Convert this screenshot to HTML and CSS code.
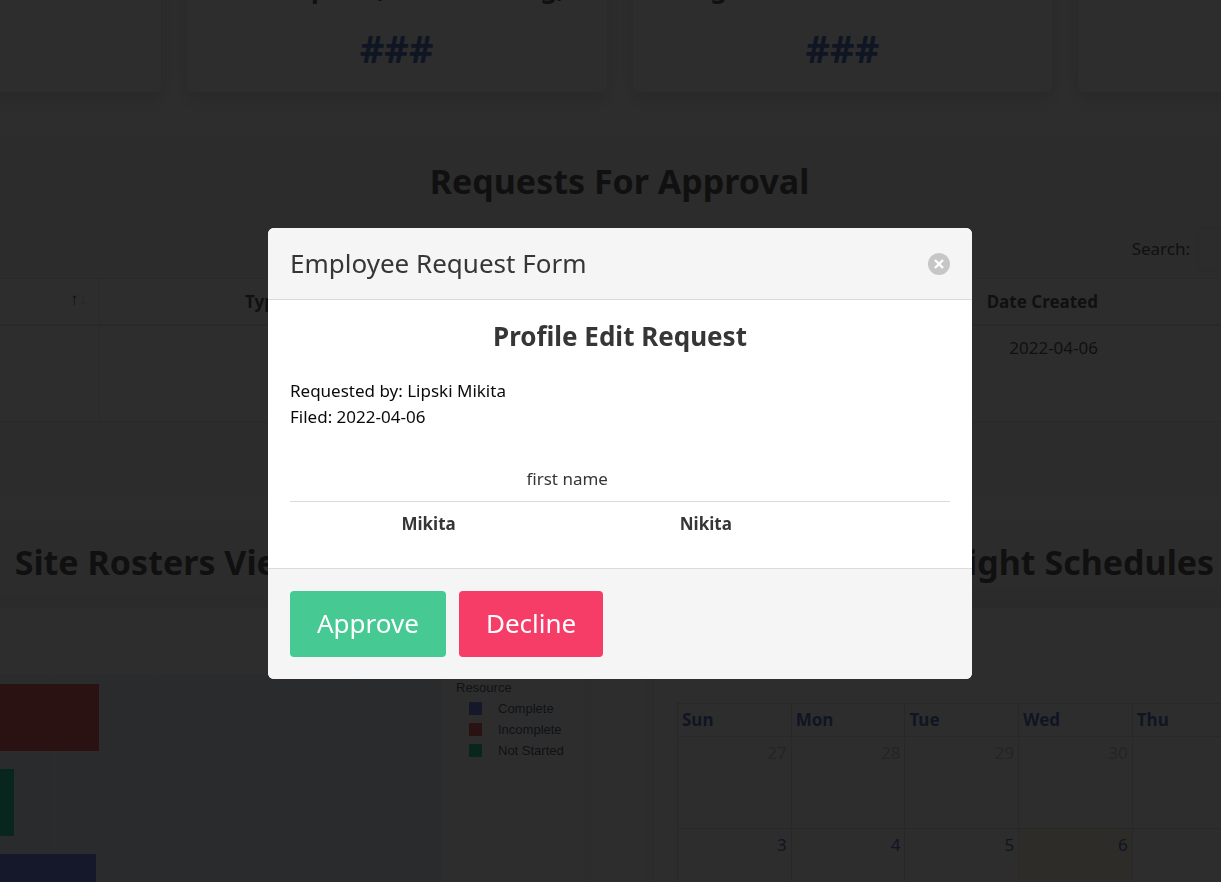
FILE: index.html
```html
<!DOCTYPE html>
<html lang="en">
<head>
<meta charset="utf-8">
<title>Employee Request Form</title>
<link rel="stylesheet" href="styles.css">
</head>
<body>
<main class="page">
  <section class="cards">
    <article class="card"><h3>Sites</h3><p>###</p></article>
    <article class="card"><h3>Incomplete, Not Working,</h3><p>###</p></article>
    <article class="card"><h3>Aged Roster Totals Due</h3><p>###</p></article>
    <article class="card"><h3>Sites</h3><p>###</p></article>
  </section>

  <section class="requests">
    <h2>Requests For Approval</h2>
    <div class="search"><label for="search">Search:</label><input id="search" type="search"></div>
    <table class="request-table">
      <thead><tr><th class="sorted"><span>↑</span><span class="dim">↓</span></th><th>Type</th><th></th><th>Date Created</th></tr></thead>
      <tbody><tr><td></td><td></td><td></td><td>2022-04-06</td></tr></tbody>
    </table>
  </section>

  <section class="heads">
    <h2>Site Rosters Viewer</h2>
    <h2>Flight Schedules</h2>
  </section>

  <section class="panels">
    <div class="panel chart">
      <div class="plot">
        <div class="bar red"></div>
        <div class="bar green"></div>
        <div class="bar blue"></div>
      </div>
      <div class="legend">
        <p>Resource</p>
        <ul>
          <li><i class="blue"></i>Complete</li>
          <li><i class="red"></i>Incomplete</li>
          <li><i class="green"></i>Not Started</li>
        </ul>
      </div>
    </div>
    <div class="panel schedule">
      <table class="calendar">
        <thead><tr><th>Sun</th><th>Mon</th><th>Tue</th><th>Wed</th><th>Thu</th><th>Fri</th><th>Sat</th></tr></thead>
        <tbody>
          <tr class="past"><td>27</td><td>28</td><td>29</td><td>30</td><td>31</td><td>1</td><td>2</td></tr>
          <tr><td>3</td><td>4</td><td>5</td><td class="today">6</td><td>7</td><td>8</td><td>9</td></tr>
        </tbody>
      </table>
    </div>
  </section>
</main>

<div class="overlay">
  <div class="modal" role="dialog" aria-modal="true" aria-labelledby="modal-title">
    <header class="modal-head">
      <h1 id="modal-title">Employee Request Form</h1>
      <button class="close" type="button" aria-label="Close">
        <svg viewBox="0 0 22 22" width="22" height="22"><circle cx="11" cy="11" r="11" fill="#c6c6c6"/><path d="M7 7l8 8M15 7l-8 8" stroke="#fff" stroke-width="2.4"/></svg>
      </button>
    </header>
    <div class="modal-body">
      <h2>Profile Edit Request</h2>
      <p>Requested by: Lipski Mikita<br>Filed: 2022-04-06</p>
      <table class="changes">
        <thead><tr><td colspan="2">first name</td><td></td></tr></thead>
        <tbody><tr><th>Mikita</th><th>Nikita</th><th></th></tr></tbody>
      </table>
    </div>
    <footer class="modal-foot">
      <button class="btn approve" type="button">Approve</button>
      <button class="btn decline" type="button">Decline</button>
    </footer>
  </div>
</div>
</body>
</html>
```
FILE: styles.css
```css
* { box-sizing: border-box; }

body {
  margin: 0;
  height: 100vh;
  overflow: hidden;
  background: #fff;
  color: #363636;
  font: 17px/26px "Noto Sans", "Open Sans", sans-serif;
}

h1, h2, h3, p, ul { margin: 0; padding: 0; }
ul { list-style: none; }
table { border-collapse: collapse; }

/* The dashboard is wider than the window on both sides. */
.page { margin: 0 -277px 0 -259px; }

.cards {
  display: grid;
  grid-template-columns: repeat(4, 1fr);
  gap: 26px;
  margin-top: -60px;
  padding-bottom: 46px;
  background: linear-gradient(#fff 70%, #f9f9f9);
}
.card {
  height: 152px;
  padding-top: 32px;
  border-radius: 6px;
  background: #fff;
  box-shadow: 0 9px 18px rgba(10, 10, 30, .1), 0 0 18px rgba(10, 10, 60, .09);
  text-align: center;
}
.card h3 { font-size: 26px; line-height: 32px; }
.card p {
  margin-top: 24px;
  color: #3257b8;
  font-size: 38px;
  font-weight: 700;
  line-height: 40px;
}

.requests { padding: 21px 0 74px; background: #f3f3f3; }
.requests h2, .heads h2 {
  color: #363636;
  font-size: 34px;
  line-height: 44px;
  text-align: center;
}
.search {
  display: flex;
  align-items: center;
  justify-content: flex-end;
  gap: 8px;
  margin-top: 24px;
}
.search input {
  width: 300px;
  height: 44px;
  border: 1px solid #e4e4e4;
  border-radius: 4px;
  background: #f9f9f9;
}
.request-table {
  width: 100%;
  margin-top: 7px;
  background: #fff;
  table-layout: fixed;
}
.request-table th, .request-table td {
  padding: 8px 12px;
  border: 1px solid #e2e2e2;
  line-height: 28px;
}
.request-table th:first-child { width: 358px; }
.request-table th:nth-child(2) { width: 331px; }
.request-table th:nth-child(3) { width: 407px; }
.request-table th:last-child, .request-table td:last-child {
  padding-right: 399px;
  border-left: 0;
  text-align: right;
}
.request-table th { border-bottom-width: 2px; line-height: 29px; }
.request-table td { height: 96px; vertical-align: top; }
.request-table .sorted { text-align: right; font: 17px/29px "Liberation Sans", sans-serif; padding-top: 4px; }
.dim { opacity: .3; }

.heads {
  display: grid;
  grid-template-columns: 1fr 1fr;
  gap: 55px;
  padding: 20px 0 24px 15px;
  border-top: 24px solid #fafafa;
  background: #f3f3f3;
}

.panels {
  display: grid;
  grid-template-columns: 843px 1fr;
  gap: 70px;
}
.panel { background: #fff; }
.chart {
  display: flex;
  gap: 14px;
  padding-top: 67px;
  font: 13px/21px "Liberation Sans", Arial, sans-serif;
  color: #2a3f5f;
  box-shadow: 0 9px 22px rgba(10, 10, 30, .1);
}
.plot {
  display: flex;
  flex-direction: column;
  gap: 18px;
  width: 701px;
  height: 300px;
  padding-top: 9px;
  background: repeating-linear-gradient(90deg, #e5ecf6 0 9px, #f6f9fc 9px 11px, #e5ecf6 11px 101px);
}
.bar { height: 67px; }
.red { background: #f0443f; }
.green { background: #00cc96; }
.blue { background: #5865e8; }
.bar.red { width: 358px; }
.bar.green { width: 273px; }
.bar.blue { width: 355px; }
.legend { padding-top: 2px; }
.legend li { display: flex; align-items: center; gap: 16px; padding-left: 13px; }
.legend i { width: 13px; height: 13px; }

.schedule { padding: 95px 24px 0 23px; box-shadow: 0 0 22px rgba(10, 10, 60, .12); }
.calendar { width: 100%; table-layout: fixed; }
.calendar th, .calendar td { border: 1px solid #ddd; padding: 3px 4px; }
.calendar th { color: #3257b8; text-align: left; }
.calendar td { height: 92px; color: #3257b8; text-align: right; vertical-align: top; }
.calendar .past td { color: #bbbfca; }
.calendar .today { background: #fff3e0; }

.overlay {
  position: fixed;
  inset: 0;
  display: grid;
  place-content: center;
  padding: 25px 0 0 19px;
  background: rgba(10, 10, 10, .86);
}
.modal {
  width: 704px;
  max-width: 100%;
  overflow: hidden;
  border-radius: 6px;
  background: #fff;
}
.modal-head {
  display: flex;
  align-items: center;
  justify-content: space-between;
  padding: 22px;
  border-bottom: 1px solid #dbdbdb;
  background: #f5f5f5;
}
.modal-head h1 { font-size: 26px; font-weight: 400; line-height: 27px; }
.close {
  width: 22px;
  height: 22px;
  padding: 0;
  border: 0;
  background: none;
}
.close svg { display: block; }
.modal-body { padding: 22px; }
.modal-body h2 { font-size: 26px; line-height: 28px; text-align: center; }
.modal-body p { margin-top: 28px; color: #0a0a0a; }
.changes { width: 100%; margin-top: 27px; table-layout: fixed; }
.changes td, .changes th { padding: 9px 13px; text-align: center; }
.changes th { width: 42%; }
.changes th:last-child { width: 16%; }
.changes td:first-child { width: 84%; }
.changes thead td { border-bottom: 1px solid #dbdbdb; }
.modal-foot {
  display: flex;
  gap: 13px;
  padding: 22px;
  border-top: 1px solid #dbdbdb;
  background: #f5f5f5;
}
.btn {
  padding: 12px 27px 14px;
  border: 0;
  border-radius: 4px;
  color: #fff;
  font: 26px/40px "Noto Sans", "Open Sans", sans-serif;
}
.approve { background: #46c993; }
.decline { background: #f53d68; }
```
